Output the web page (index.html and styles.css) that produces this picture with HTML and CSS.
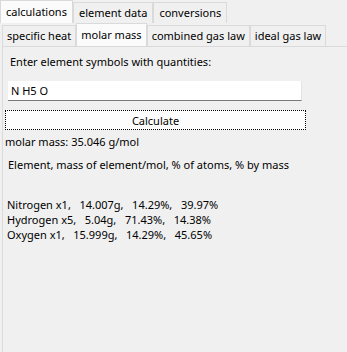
FILE: index.html
```html
<!doctype html>
<html>
  <head>
    <meta charset="utf-8">
    <title>Chemistry Calculator</title>
    <link rel="stylesheet" href="styles.css">
  </head>
  <body>
    <div class="tabs top">
      <span class="tab selected">calculations</span>
      <span class="tab">element data</span>
      <span class="tab">conversions</span>
    </div>

    <div class="tabs sub">
      <span class="tab">specific heat</span>
      <span class="tab selected">molar mass</span>
      <span class="tab">combined gas law</span>
      <span class="tab">ideal gas law</span>
    </div>

    <section class="panel">
      <p class="prompt">Enter element symbols with quantities:</p>
      <input class="entry" type="text" value="N H5 O">
      <button class="calc">Calculate</button>
      <p class="result">molar mass: 35.046 g/mol</p>
      <p class="header">Element, mass of element/mol, % of atoms, % by mass</p>
      <pre class="rows">Nitrogen x1,   14.007g,   14.29%,   39.97%
Hydrogen x5,   5.04g,   71.43%,   14.38%
Oxygen x1,   15.999g,   14.29%,   45.65%</pre>
    </section>
  </body>
</html>
```

FILE: styles.css
```css
html, body {
  margin: 0;
  padding: 0;
  width: 100%;
  height: 100%;
  background: #f0f0f0;
  font-family: "Noto Sans", sans-serif;
  font-size: 11px;
  line-height: 15px;
  color: #000000;
}

.tabs {
  display: flex;
  align-items: flex-end;
}

.tabs.top {
  height: 23px;
}

.tabs.sub {
  height: 23px;
  padding-left: 2px;
}

.tab {
  display: block;
  height: 21px;
  line-height: 20px;
  padding: 0 5px;
  border: 1px solid #dadada;
  border-bottom: none;
  box-sizing: border-box;
  background: #f0f0f0;
  white-space: nowrap;
}

.tabs.sub .tab {
  padding: 0 4px;
}

.tab.selected {
  height: 23px;
  line-height: 22px;
  background: #fbfbfb;
}

.panel {
  border-top: 1px solid #dadada;
  border-left: 1px solid #dadada;
  margin-left: 2px;
  padding: 0 0 0 2px;
  height: 305px;
  display: flex;
  flex-direction: column;
  align-items: flex-start;
}

.prompt {
  margin: 7px 0 0 5px;
}

.entry {
  margin: 12px 0 0 3px;
  width: 294px;
  height: 20px;
  box-sizing: border-box;
  border: none;
  border-bottom: 1px solid #7a7a7a;
  border-right: 1px solid #e3e3e3;
  background: #ffffff;
  font: inherit;
  padding: 0 0 0 3px;
}

.calc {
  margin: 9px 0 0 0;
  width: 301px;
  height: 20px;
  font: inherit;
  background: #fdfdfd;
  border: 1px dotted #000000;
  padding: 0;
}

.result {
  margin: 4px 0 0 0;
}

.header {
  margin: 8px 0 0 3px;
}

.rows {
  font: inherit;
  margin: 25px 0 0 2px;
}
```
